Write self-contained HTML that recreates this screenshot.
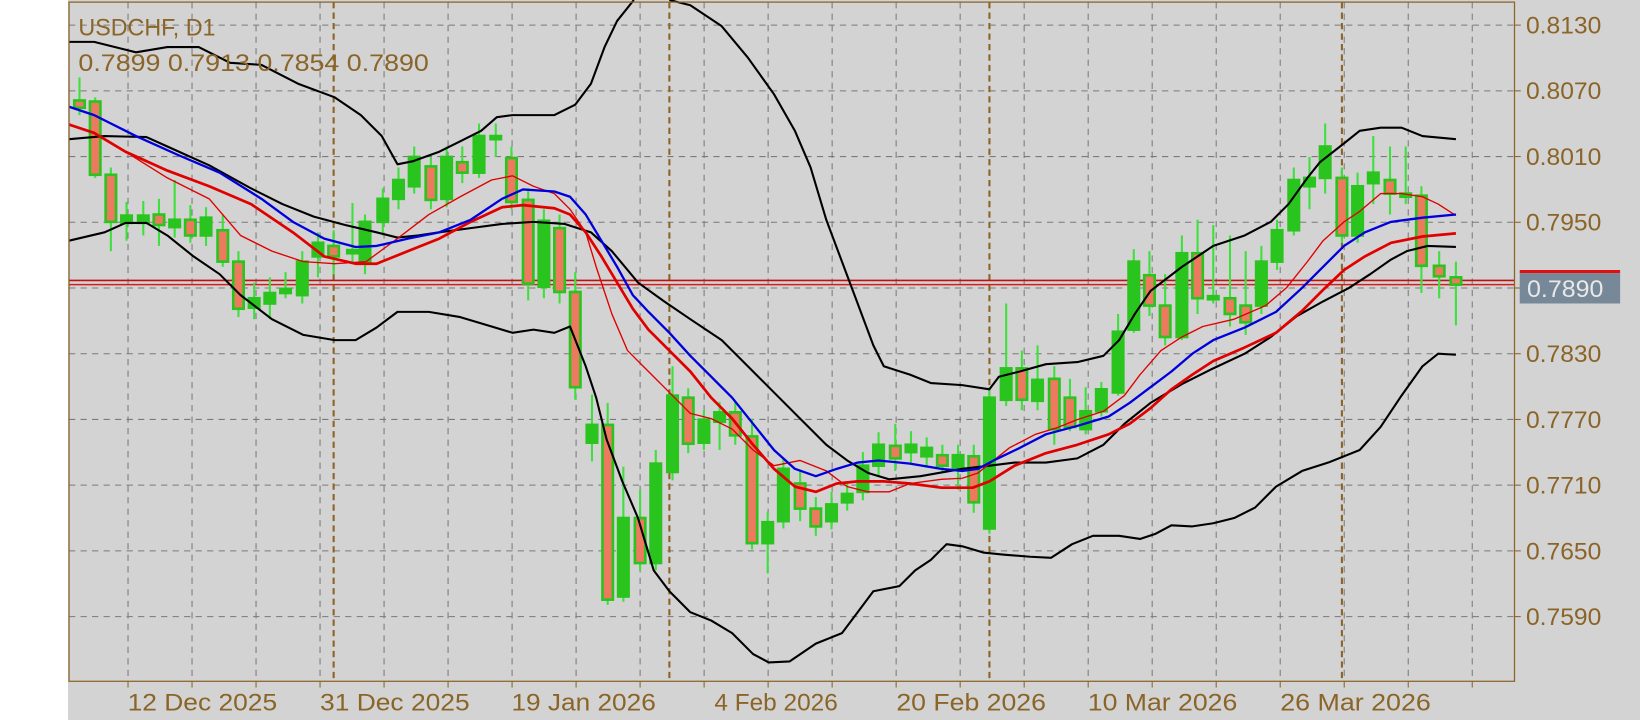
<!DOCTYPE html>
<html><head><meta charset="utf-8"><style>
html,body{margin:0;padding:0;background:#fff;width:1640px;height:720px;overflow:hidden}
svg{display:block}
text{font-family:"Liberation Sans",sans-serif;fill:#8b6428}
</style></head><body>
<svg id="s" width="1640" height="720" viewBox="0 0 1568 688" preserveAspectRatio="none" xmlns="http://www.w3.org/2000/svg">
<rect x="0" y="0" width="1568" height="688" fill="#fff"/>
<rect x="65" y="0" width="1503" height="688" fill="#d3d3d3"/>
<g id="grid" stroke="#7a7a7a" stroke-width="1" stroke-dasharray="6,5"></g>
<g id="vb" stroke="#8b6428" stroke-width="2" stroke-dasharray="6,4">
<line x1="319" y1="2" x2="319" y2="651"/><line x1="640" y1="2" x2="640" y2="651"/>
<line x1="946" y1="2" x2="946" y2="651"/><line x1="1283" y1="2" x2="1283" y2="651"/>
</g>
<line x1="66" y1="268" x2="1448" y2="268" stroke="#c01010" stroke-width="1.5"/>
<line x1="66" y1="272" x2="1448" y2="272" stroke="#d02020" stroke-width="1.5"/>
<g id="c"></g>
<g id="l" fill="none" stroke-linejoin="round"></g>
<rect x="66" y="2" width="1382" height="649" fill="none" stroke="#8b6428" stroke-width="1.2"/>
<text x="75" y="34" font-size="23" textLength="131" lengthAdjust="spacingAndGlyphs">USDCHF, D1</text>
<text x="75" y="68" font-size="23" textLength="335" lengthAdjust="spacingAndGlyphs">0.7899 0.7913 0.7854 0.7890</text>
<g id="ax" font-size="23"></g>
<rect x="1453" y="258" width="96" height="3" fill="#e01010"/>
<rect x="1453" y="261" width="96" height="29" fill="#778899"/>
<text x="1460" y="284" font-size="23" style="fill:#e8e8e8" textLength="73" lengthAdjust="spacingAndGlyphs">0.7890</text>
<g font-size="23">
<text x="122" y="679" textLength="143" lengthAdjust="spacingAndGlyphs">12 Dec 2025</text><text x="306" y="679" textLength="143" lengthAdjust="spacingAndGlyphs">31 Dec 2025</text>
<text x="489" y="679" textLength="138" lengthAdjust="spacingAndGlyphs">19 Jan 2026</text><text x="683" y="679" textLength="118" lengthAdjust="spacingAndGlyphs">4 Feb 2026</text>
<text x="857" y="679" textLength="143" lengthAdjust="spacingAndGlyphs">20 Feb 2026</text><text x="1040" y="679" textLength="143" lengthAdjust="spacingAndGlyphs">10 Mar 2026</text>
<text x="1224" y="679" textLength="144" lengthAdjust="spacingAndGlyphs">26 Mar 2026</text>
</g>
</svg>
<script>
var NS="http://www.w3.org/2000/svg";
function el(p,t,a){var e=document.createElementNS(NS,t);for(var k in a)e.setAttribute(k,a[k]);p.appendChild(e);return e;}
var g=document.getElementById('grid'),ax=document.getElementById('ax');
var labels=["0.8130","0.8070","0.8010","0.7950","","0.7830","0.7770","0.7710","0.7650","0.7590"];
for(var i=0;i<10;i++){var y=24+i*62.8;el(g,'line',{x1:66,y1:y,x2:1448,y2:y});
 if(labels[i]){el(ax,'line',{x1:1448,y1:y,x2:1454,y2:y,stroke:'#8b6428'});var t=el(ax,'text',{x:1459,y:y+8,textLength:72,lengthAdjust:'spacingAndGlyphs'});t.textContent=labels[i];}}
el(ax,'line',{x1:1448,y1:24+4*62.8,x2:1454,y2:24+4*62.8,stroke:'#8b6428'});
for(var x=122.4;x<1448;x+=61.2){el(g,'line',{x1:x,y1:2,x2:x,y2:651});el(ax,'line',{x1:x,y1:651,x2:x,y2:657,stroke:'#8b6428'});}
var D=[[76,96,103,74,110],[91,97,167,93,170],[106,167,212,160,240],[121,213,206,193,230],[137,213,206,192,225],[152,205,215,190,235],[167,217,210,172,227],[182,210,225,196,232],[197,225,208,198,235],[213,220,250,205,255],[228,250,295,240,303],[243,294,285,270,305],[258,290,280,265,305],[273,280,276,260,285],[289,282,250,240,290],[304,245,232,222,265],[319,235,245,220,262],[337,242,239,194,250],[349,250,212,205,262],[366,212,190,180,225],[381,190,172,160,200],[396,178,150,140,185],[412,159,191,150,200],[427,190,150,140,198],[442,155,165,140,175],[458,165,130,118,170],[474,132,130,118,150],[489,151,193,140,200],[505,191,271,180,287],[520,274,211,200,285],[535,218,279,205,290],[550,279,370,260,382],[566,423,406,377,441],[581,406,573,385,578],[596,570,495,446,575],[612,495,538,468,545],[627,538,443,430,545],[643,451,378,350,459],[658,380,424,371,433],[673,423,401,392,430],[688,403,394,384,430],[703,394,416,384,425],[719,417,519,400,525],[734,519,499,489,548],[749,498,448,438,505],[765,462,486,450,498],[780,486,503,475,512],[795,498,482,470,506],[810,480,472,462,488],[825,470,445,432,478],[840,445,425,413,455],[856,426,438,405,450],[871,432,425,412,442],[886,436,428,418,447],[901,435,445,425,452],[916,447,435,425,468],[931,436,480,425,490],[946,505,380,370,510],[962,382,352,290,388],[977,352,382,335,392],[992,383,363,330,392],[1008,362,410,350,425],[1023,380,408,362,412],[1038,410,393,370,415],[1053,393,372,365,398],[1069,375,317,300,378],[1084,315,250,238,318],[1099,263,292,240,302],[1114,292,322,262,330],[1130,322,242,225,325],[1145,242,285,210,300],[1160,285,283,215,290],[1176,285,300,225,312],[1191,292,308,240,320],[1206,292,250,235,300],[1221,250,220,210,258],[1237,220,172,160,225],[1252,178,170,150,200],[1267,170,140,118,185],[1283,170,225,160,232],[1298,225,178,165,232],[1313,175,165,130,195],[1329,172,185,140,205],[1344,188,185,140,195],[1359,187,254,178,280],[1376,254,264,240,285],[1392,265,272,250,311]];
var c=document.getElementById('c');
D.forEach(function(d){var x=d[0],o=d[1],cl=d[2],h=d[3],l=d[4];
 el(c,'line',{x1:x,y1:h,x2:x,y2:l,stroke:'#3ee03e','stroke-width':2});
 var top=Math.min(o,cl),ht=Math.max(Math.abs(o-cl),3),bull=cl<o;
 el(c,'rect',{x:x-5,y:top,width:10,height:ht,fill:bull?'#2ac41e':'#ec7a5e',stroke:'#2ac41e','stroke-width':2.5});});
function P(s,col,w){el(document.getElementById('l'),'polyline',{points:s,stroke:col,'stroke-width':w});}
P("66,40 90,40 130,50 160,45 190,45 220,60 250,62 285,80 320,93 345,110 365,130 380,157 395,154 420,145 440,135 460,125 475,112 490,110 530,110 550,100 565,80 578,45 590,20 606,0","#000",2);
P("640,0 660,5 690,25 715,55 740,90 760,125 775,160 790,210 805,250 820,290 835,330 845,350 870,358 890,366 920,368 946,372 955,360 975,355 1000,348 1030,346 1055,340 1070,325 1085,300 1100,278 1130,255 1160,235 1190,225 1215,212 1232,195 1250,170 1262,155 1285,137 1300,125 1320,122 1340,122 1360,130 1392,133","#000",2);
P("66,133 100,130 140,131 160,140 200,158 240,180 270,195 300,207 330,215 360,222 380,227 400,225 420,222 450,218 480,214 510,212 540,214 565,222 585,240 610,270 635,288 660,305 690,325 715,350 740,375 765,400 790,425 810,440 830,452 850,458 880,455 920,448 946,445 970,442 1000,442 1030,438 1055,425 1075,405 1100,385 1130,367 1160,352 1190,338 1215,322 1240,302 1265,288 1290,275 1310,262 1330,248 1345,240 1365,235 1392,236","#000",2);
P("66,230 100,222 120,213 140,213 160,225 185,245 210,262 230,282 260,305 290,320 320,325 340,325 360,313 380,298 410,298 440,303 470,312 490,318 510,315 530,318 545,312 560,350 570,380 580,420 595,460 610,495 625,545 640,565 660,585 680,593 700,605 720,625 735,633 755,632 780,615 805,605 820,585 835,565 860,560 875,545 890,535 905,520 920,522 940,528 960,530 985,532 1005,533 1025,520 1045,512 1070,512 1090,515 1105,510 1120,502 1140,503 1160,500 1180,495 1200,485 1220,465 1245,450 1270,442 1300,430 1320,408 1340,378 1360,350 1375,338 1392,339","#000",2);
P("66,119 90,127 120,145 160,170 200,190 230,225 260,240 290,250 320,252 350,250 380,228 410,205 440,188 470,172 490,168 510,178 530,185 545,200 560,222 570,255 585,300 600,335 620,355 640,375 660,395 680,400 700,410 720,430 740,445 765,440 790,450 810,465 830,470 850,470 870,462 900,458 920,457 935,452 950,440 965,428 990,415 1010,409 1030,401 1055,393 1075,378 1090,358 1110,335 1130,322 1150,312 1180,305 1210,292 1230,275 1250,250 1265,230 1285,212 1300,202 1320,185 1340,185 1360,188 1375,195 1392,206","#e00000",1.3);
P("66,119 90,127 120,145 160,163 200,178 240,195 280,222 310,245 340,252 360,252 390,240 420,228 450,212 480,198 500,196 530,199 545,205 560,222 575,245 590,270 605,295 620,315 640,335 660,355 680,380 700,400 720,425 740,448 760,465 780,470 800,462 820,460 845,460 870,462 900,466 930,466 946,460 970,445 1000,433 1030,425 1060,415 1080,405 1100,390 1120,372 1140,358 1160,345 1190,332 1220,318 1245,297 1265,277 1285,258 1305,245 1330,232 1360,226 1392,223","#e00000",2.6);
P("66,102 90,110 130,130 170,148 210,165 250,190 280,212 310,228 340,236 360,235 390,228 420,222 450,210 480,190 500,181 530,183 545,188 560,205 575,230 590,255 605,282 620,298 640,318 660,340 680,360 700,380 720,405 740,430 760,448 780,455 800,448 820,442 840,440 870,443 900,448 920,450 935,448 950,440 975,428 1000,415 1030,407 1060,398 1080,385 1100,370 1120,355 1140,338 1160,325 1190,313 1220,298 1245,275 1265,255 1285,235 1305,222 1330,212 1360,208 1392,205","#0000dd",2.2);
</script>
</body></html>
